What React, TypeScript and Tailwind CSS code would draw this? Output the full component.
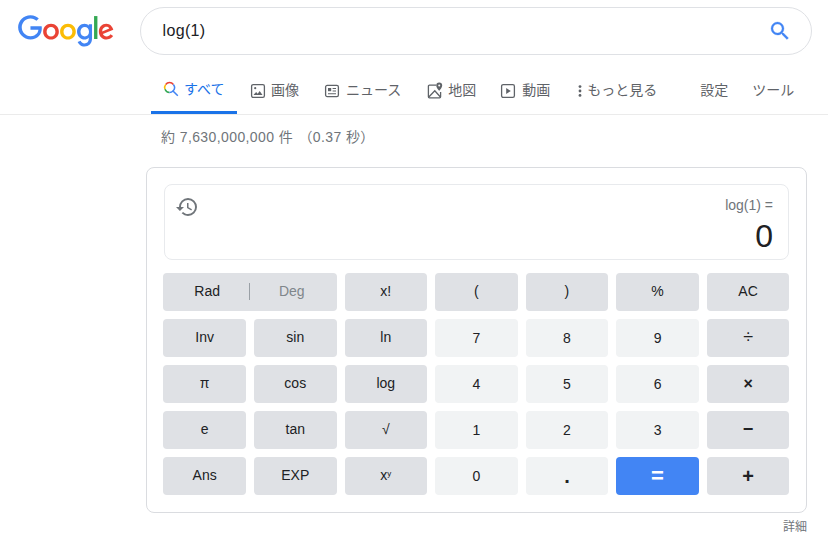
import React from "react";

const font = { fontFamily: '"Liberation Sans", "Noto Sans CJK JP", sans-serif' };

function Logo() {
  return (
    <svg viewBox="0 0 272 92" className="w-[96px] h-[32.5px] block">
      <path fill="#EA4335" d="M115.75 47.18c0 12.77-9.99 22.18-22.25 22.18s-22.25-9.41-22.25-22.18C71.25 34.32 81.24 25 93.5 25s22.25 9.32 22.25 22.18zm-9.74 0c0-7.98-5.79-13.44-12.51-13.44S80.99 39.2 80.99 47.18c0 7.9 5.79 13.44 12.51 13.44s12.51-5.55 12.51-13.44z" />
      <path fill="#FBBC05" d="M163.75 47.18c0 12.77-9.99 22.18-22.25 22.18s-22.25-9.41-22.25-22.18c0-12.85 9.99-22.18 22.25-22.18s22.25 9.32 22.25 22.18zm-9.74 0c0-7.98-5.79-13.44-12.51-13.44s-12.51 5.46-12.51 13.44c0 7.9 5.79 13.44 12.51 13.44s12.51-5.55 12.51-13.44z" />
      <path fill="#4285F4" d="M209.75 26.34v39.82c0 16.38-9.66 23.07-21.08 23.07-10.75 0-17.22-7.19-19.66-13.07l8.48-3.53c1.51 3.61 5.21 7.87 11.17 7.87 7.31 0 11.84-4.51 11.84-13v-3.19h-.34c-2.18 2.69-6.38 5.04-11.68 5.04-11.09 0-21.25-9.66-21.25-22.09 0-12.52 10.16-22.26 21.25-22.26 5.29 0 9.49 2.35 11.68 4.96h.34v-3.61h9.25zm-8.56 20.92c0-7.81-5.21-13.52-11.84-13.52-6.72 0-12.35 5.71-12.35 13.52 0 7.73 5.63 13.36 12.35 13.36 6.63 0 11.84-5.63 11.84-13.36z" />
      <path fill="#34A853" d="M225 3v65h-9.5V3h9.5z" />
      <path fill="#EA4335" d="M262.02 54.48l7.56 5.04c-2.44 3.61-8.32 9.83-18.48 9.83-12.6 0-22.01-9.74-22.01-22.18 0-13.19 9.49-22.18 20.92-22.18 11.51 0 17.14 9.16 18.98 14.11l1.01 2.52-29.65 12.28c2.27 4.45 5.8 6.72 10.75 6.72 4.96 0 8.4-2.44 10.92-6.14zm-23.27-7.98l19.82-8.23c-1.09-2.77-4.37-4.7-8.23-4.7-4.95 0-11.84 4.37-11.59 12.93z" />
      <path fill="#4285F4" d="M35.29 41.41V32H67c.31 1.64.47 3.58.47 5.68 0 7.06-1.93 15.79-8.15 22.01-6.05 6.3-13.78 9.66-24.02 9.66C16.32 69.35.36 53.89.36 34.91.36 15.93 16.32.47 35.3.47c10.5 0 17.98 4.12 23.6 9.49l-6.64 6.64c-4.03-3.78-9.49-6.72-16.97-6.72-13.86 0-24.7 11.17-24.7 25.03 0 13.86 10.84 25.03 24.7 25.03 8.99 0 14.11-3.61 17.39-6.89 2.66-2.66 4.41-6.46 5.1-11.65l-22.49.01z" />
    </svg>
  );
}

function AllIcon() {
  return (
    <svg viewBox="0 0 16 16" className="w-4 h-4 mr-[5px]" fill="none" strokeWidth="1.5">
      <path d="M2.7 3.5a4.9 4.9 0 0 1 3.8-1.9 4.9 4.9 0 0 1 3.9 1.9" stroke="#EA4335" />
      <path d="M2.7 3.5a4.9 4.9 0 0 0-.7 4.8" stroke="#FBBC05" />
      <path d="M2 8.3a4.9 4.9 0 0 0 4.5 3.2" stroke="#34A853" />
      <path d="M6.5 11.5a4.9 4.9 0 0 0 3.5-1.5" stroke="#4285F4" />
      <path d="M10.4 3.5a4.9 4.9 0 0 1-.4 6.5l4.8 4.8" stroke="#4285F4" />
    </svg>
  );
}

function ImageIcon() {
  return (
    <svg viewBox="0 0 16 16" className="w-4 h-4 mr-[5px]" fill="none">
      <rect x="1.6" y="1.6" width="12.8" height="12.8" rx="1.6" stroke="#5f6368" strokeWidth="1.3" />
      <circle cx="5.2" cy="5.2" r="1.1" fill="#5f6368" />
      <path d="M3.5 12l2.6-3 1.6 1.7 2-2.7 2.8 4z" fill="#5f6368" />
    </svg>
  );
}

function NewsIcon() {
  return (
    <svg viewBox="0 0 16 16" className="w-4 h-4 mr-[6px]" fill="none">
      <rect x="1.6" y="2.4" width="12.8" height="11.2" rx="1.6" stroke="#5f6368" strokeWidth="1.3" />
      <rect x="4" y="5" width="3.2" height="3.2" fill="#5f6368" />
      <path d="M8.6 5.5h3.4M8.6 8h3.4M4 10.8h8" stroke="#5f6368" strokeWidth="1.1" />
    </svg>
  );
}

function MapIcon() {
  return (
    <svg viewBox="0 0 16 16" className="w-4 h-4 mr-[5px] overflow-visible" fill="none">
      <path d="M9 2.2H2.4a1 1 0 0 0-1 1v10.6a1 1 0 0 0 1 1h10.2a1 1 0 0 0 1-1V9" stroke="#5f6368" strokeWidth="1.3" />
      <path d="M1.8 14l6-6.2 5.6 6.2" stroke="#5f6368" strokeWidth="1.3" />
      <path d="M12.2 -.4a3 3 0 0 0-3 3c0 2.2 3 5.4 3 5.4s3-3.2 3-5.4a3 3 0 0 0-3-3z" fill="#5f6368" />
      <circle cx="12.2" cy="2.6" r="1" fill="#fff" />
    </svg>
  );
}

function VideoIcon() {
  return (
    <svg viewBox="0 0 16 16" className="w-4 h-4 mr-[6px]" fill="none">
      <rect x="1.6" y="1.6" width="12.8" height="12.8" rx="1.6" stroke="#5f6368" strokeWidth="1.3" />
      <path d="M6.2 5v6l4.6-3z" fill="#5f6368" />
    </svg>
  );
}

function DotsIcon() {
  return (
    <svg viewBox="0 0 4 16" className="w-1 h-4 mr-[5px]" fill="#5f6368">
      <circle cx="2" cy="3.6" r="1.4" />
      <circle cx="2" cy="8" r="1.4" />
      <circle cx="2" cy="12.4" r="1.4" />
    </svg>
  );
}

type Tab = { label: string; icon: React.ReactNode; ml: string };

const tabs: Tab[] = [
  { label: "画像", icon: <ImageIcon />, ml: "ml-px" },
  { label: "ニュース", icon: <NewsIcon />, ml: "ml-px" },
  { label: "地図", icon: <MapIcon />, ml: "ml-[2px]" },
  { label: "動画", icon: <VideoIcon />, ml: "ml-0" },
  { label: "もっと見る", icon: <DotsIcon />, ml: "ml-[4px]" },
];

type Key = { t: React.ReactNode; k: "d" | "l" | "b"; size?: string };

const rows: Key[][] = [
  [{ t: "x!", k: "d" }, { t: "(", k: "d" }, { t: ")", k: "d" }, { t: "%", k: "d" }, { t: "AC", k: "d" }],
  [{ t: "Inv", k: "d" }, { t: "sin", k: "d" }, { t: "ln", k: "d" }, { t: "7", k: "l" }, { t: "8", k: "l" }, { t: "9", k: "l" }, { t: "÷", k: "d", size: "text-[18px]" }],
  [{ t: "π", k: "d" }, { t: "cos", k: "d" }, { t: "log", k: "d" }, { t: "4", k: "l" }, { t: "5", k: "l" }, { t: "6", k: "l" }, { t: "×", k: "d", size: "font-bold text-[16px]" }],
  [{ t: "e", k: "d" }, { t: "tan", k: "d" }, { t: "√", k: "d" }, { t: "1", k: "l" }, { t: "2", k: "l" }, { t: "3", k: "l" }, { t: "−", k: "d", size: "font-bold text-[18px]" }],
  [
    { t: "Ans", k: "d" },
    { t: "EXP", k: "d" },
    { t: <span>x<sup className="text-[8px] leading-none align-[4px] top-0">y</sup></span>, k: "d" },
    { t: "0", k: "l" },
    { t: ".", k: "l", size: "font-bold text-[20px]" },
    { t: "=", k: "b", size: "font-bold text-[22px]" },
    { t: "+", k: "d", size: "font-bold text-[20px]" },
  ],
];

function CalcKey({ item }: { item: Key }) {
  const color =
    item.k === "d"
      ? "bg-[#dfe1e5] text-[#202124] pb-px"
      : item.k === "l"
        ? "bg-[#f1f3f4] text-[#202124]"
        : "bg-[#4285f4] text-white pb-px";
  return (
    <div className={`h-[38px] rounded flex items-center justify-center text-[14px] ${color} ${item.size ?? ""}`}>
      {item.t}
    </div>
  );
}

export default function App() {
  return (
    <div className="w-[828px] h-[539px] overflow-hidden bg-white" style={font}>
      <header className="flex items-start h-[70px] pt-[7px]">
        <div className="ml-[18px] mt-[8px] w-[122px] shrink-0">
          <Logo />
        </div>
        <div className="w-[672px] h-[48px] rounded-full border border-[#dfe1e5] flex items-center pl-[21.5px] pr-[19px]">
          <span className="text-[16px] tracking-[0.35px] text-[#202124] flex-1">log(1)</span>
          <svg viewBox="0 0 24 24" className="w-6 h-6" fill="#4285f4" stroke="#4285f4" strokeWidth="0.3">
            <path d="M15.5 14h-.79l-.28-.27A6.471 6.471 0 0 0 16 9.5 6.5 6.5 0 1 0 9.5 16c1.61 0 3.09-.59 4.23-1.57l.27.28v.79l5 4.99L20.49 19l-4.99-5zm-6 0C7.01 14 5 11.99 5 9.5S7.01 5 9.5 5 14 7.01 14 9.5 11.99 14 9.5 14z" />
          </svg>
        </div>
      </header>

      <nav className="h-[45px] border-b border-[#ebebeb] flex pl-[151px] text-[14px] text-[#5f6368]">
        <div className="h-[44px] w-[86px] pl-3 flex items-center pb-[3px] border-b-[3px] border-[#1a73e8] text-[#1a73e8] shrink-0">
          <AllIcon />
          すべて
        </div>
        {tabs.map((tab) => (
          <div key={tab.label} className={`h-[44px] px-3 flex items-center pb-[3px] ${tab.ml}`}>
            {tab.icon}
            {tab.label}
          </div>
        ))}
        <div className="flex ml-[19px]">
          <div className="h-[44px] px-3 flex items-center pb-[3px]">設定</div>
          <div className="h-[44px] px-3 flex items-center pb-[3px]">ツール</div>
        </div>
      </nav>

      <div className="pl-[161px] h-[52px] pt-[12px] text-[14px] tracking-[0.4px] leading-[20px] text-[#70757a]">
        約 7,630,000,000 件 <span className="ml-[1px]">（0.37 秒）</span>
      </div>

      <main className="ml-[146px] w-[661px] h-[346px] rounded-lg border border-[#dadce0] pl-[16.4px] pt-4">
        <div className="ml-[0.6px] w-[625px] h-[76px] rounded-lg border border-[#e8eaed] relative flex flex-col items-end pr-[15px] pt-[12px]">
          <svg viewBox="0 0 24 24" className="w-6 h-6 absolute left-[10px] top-[10px]" fill="#70757a">
            <path d="M13 3a9 9 0 0 0-9 9H1l3.89 3.89.07.14L9 12H6c0-3.87 3.13-7 7-7s7 3.13 7 7-3.13 7-7 7c-1.93 0-3.68-.79-4.94-2.06l-1.42 1.42A8.954 8.954 0 0 0 13 21a9 9 0 0 0 0-18zm-1 5v5l4.28 2.54.72-1.21-3.5-2.08V8H12z" />
          </svg>
          <div className="text-[14px] leading-[16px] text-[#70757a]">log(1) =</div>
          <div className="text-[32px] leading-[36px] mt-[5px] text-[#202124]">0</div>
        </div>

        <div className="mt-[13px] grid grid-cols-7 gap-2 w-[626px]">
          <div className="col-span-2 h-[38px] rounded bg-[#dfe1e5] flex items-center text-[14px] pb-px">
            <span className="flex-1 text-center text-[#202124] pl-[2px]">Rad</span>
            <span className="w-px h-[17px] bg-[#9aa0a6]" />
            <span className="flex-1 text-center text-[#80868b] pr-[3px]">Deg</span>
          </div>
          {rows.flat().map((item, i) => (
            <CalcKey key={i} item={item} />
          ))}
        </div>
      </main>

      <div className="w-[807px] text-right text-[12px] leading-[16px] text-[#70757a] mt-[6px]">詳細</div>
    </div>
  );
}
